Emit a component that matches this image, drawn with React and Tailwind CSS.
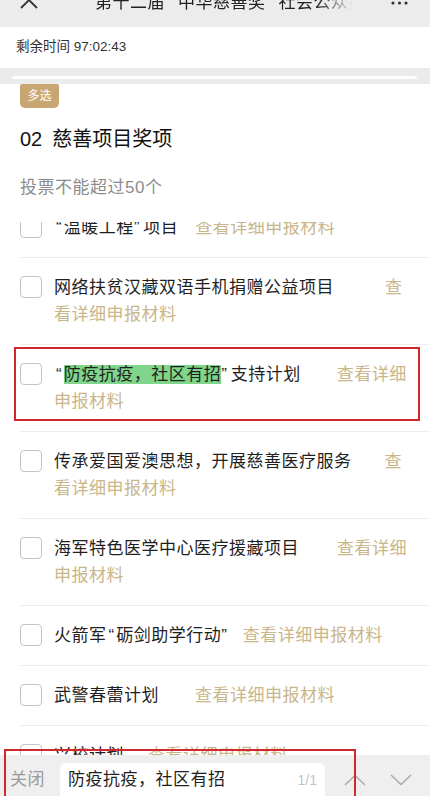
import React from "react";

const items = [
  { title: ["“", "温暖工程", "”", "项目"], gap: "ml-[17px]" },
  { title: ["网络扶贫汉藏双语手机捐赠公益项目"], gap: "ml-[51px]" },
  { title: ["“", "防疫抗疫，社区有招", "”", "支持计划"], gap: "ml-[36px]", hit: true },
  { title: ["传承爱国爱澳思想，开展慈善医疗服务"], gap: "ml-[33px]" },
  { title: ["海军特色医学中心医疗援藏项目"], gap: "ml-[38px]" },
  { title: ["火箭军", "“", "砺剑助学行动", "”"], gap: "ml-[12px]" },
  { title: ["武警春蕾计划"], gap: "ml-[36px]" },
  { title: ["兴校计划"], gap: "ml-[24px]" },
];

// quotes from Liberation Sans are narrow, widen them a bit
const Piece = ({ text, hit }) => {
  if (text === "“") return <span className="pl-[2px] tracking-[2px]">{text}</span>;
  if (text === "”") return <span className="tracking-[4px]">{text}</span>;
  if (hit && text === "防疫抗疫，社区有招") {
    return <span className="bg-[#7fd58a]">{text}</span>;
  }
  return <span>{text}</span>;
};

const Chevron = ({ up, className }) => (
  <svg className={className} viewBox="0 0 22 12" fill="none">
    <polyline
      points={up ? "1,11 11,1.5 21,11" : "1,1 11,10.5 21,1"}
      stroke="#a8a8a8"
      strokeWidth="1.4"
    />
  </svg>
);

const Item = ({ item, first }) => (
  <div
    className={`relative flex items-start border-b border-[#eeeeee] py-[16px] pr-[16px] ${
      first ? "-mt-[24.5px]" : ""
    }`}
  >
    <div className="mt-[2.5px] h-[22px] w-[22px] shrink-0 rounded-[4px] border border-[#c4c4c4] bg-white" />
    <p className="ml-[12px] flex-1 text-[17px] leading-[27px] tracking-[0.5px] text-[#1f1f1f]">
      {item.title.map((t, i) => (
        <Piece key={i} text={t} hit={item.hit} />
      ))}
      <span className={`${item.gap} text-[#c9b68a]`}>查看详细申报材料</span>
    </p>
    {item.hit && (
      <div className="absolute -left-[6px] top-[2px] h-[74px] w-[406px] border-[2.5px] border-[#d0282c]" />
    )}
  </div>
);

export default function App() {
  return (
    <div className="relative flex h-[796px] w-[430px] flex-col overflow-hidden bg-white [font-family:'Liberation_Sans','Noto_Sans_CJK_SC',sans-serif]">
      {/* top bar, cut off by the screenshot */}
      <div className="flex h-[27px] shrink-0 items-start overflow-hidden bg-[#ececec]">
        <svg className="ml-[20px] -mt-[1px] h-[10px] w-[18px]" viewBox="0 0 18 10" fill="none">
          <polyline points="1,9 9,1 17,9" stroke="#333" strokeWidth="1.8" />
        </svg>
        <div className="ml-[57px] -mt-[9px] w-[258px] overflow-hidden whitespace-nowrap text-[17px] leading-[24px] tracking-[0.5px] text-[#222] [mask-image:linear-gradient(to_right,black_86%,transparent)]">
          <span>第十二届</span>
          <span className="ml-[13px]">中华慈善奖</span>
          <span className="ml-[13px]">社会公众投票</span>
        </div>
        <svg className="ml-auto mr-[22px] mt-[1px] h-[4px] w-[17px]" viewBox="0 0 17 4">
          <circle cx="2" cy="2" r="1.6" fill="#333" />
          <circle cx="8.5" cy="2" r="1.6" fill="#333" />
          <circle cx="15" cy="2" r="1.6" fill="#333" />
        </svg>
      </div>

      <div className="flex h-[41px] shrink-0 items-center px-[16px] text-[13.5px] text-[#333]">
        剩余时间 97:02:43
      </div>

      <div className="h-[16px] shrink-0 bg-[#ebebeb] pt-[8px]">
        <div className="ml-[12px] mr-[13px] h-[3px] rounded-t-sm bg-white" />
      </div>

      <div className="flex min-h-0 flex-1 flex-col px-[20px]">
        <div className="flex h-[24px] w-[39px] items-center justify-center rounded-t-[2px] rounded-b-[5px] bg-[#c8a672] text-[12px] text-white">
          多选
        </div>
        <div className="mt-[17px] flex items-center text-[20px] leading-[28px] text-[#111]">
          <span>02</span>
          <span className="ml-[10px]">慈善项目奖项</span>
        </div>
        <p className="mt-[22px] text-[17px] leading-[26px] tracking-[0.5px] text-[#8c8c8c]">
          投票不能超过50个
        </p>
        <div className="-mx-[20px] mt-[21px] min-h-0 flex-1 overflow-hidden pl-[20px]">
          {items.map((item, i) => (
            <Item key={i} item={item} first={i === 0} />
          ))}
        </div>
      </div>

      {/* find-in-page bar */}
      <div className="flex h-[41px] shrink-0 items-center overflow-hidden bg-[#efefef] pt-[9px]">
        <span className="pl-[10px] text-[17px] tracking-[0.5px] text-[#9a9a9a]">关闭</span>
        <div className="ml-[15px] flex h-[34px] w-[265px] shrink-0 items-center justify-between rounded-t-[6px] bg-white px-[8px]">
          <span className="text-[17px] tracking-[0.5px] text-[#1f1f1f]">防疫抗疫，社区有招</span>
          <span className="text-[14px] text-[#c4c4c4]">1/1</span>
        </div>
        <Chevron up className="ml-[19px] h-[12px] w-[22px]" />
        <Chevron className="ml-[24px] h-[12px] w-[22px]" />
      </div>

      <div className="absolute left-[4px] top-[749px] h-[60px] w-[352px] border-[2.5px] border-[#d0282c]" />
    </div>
  );
}
